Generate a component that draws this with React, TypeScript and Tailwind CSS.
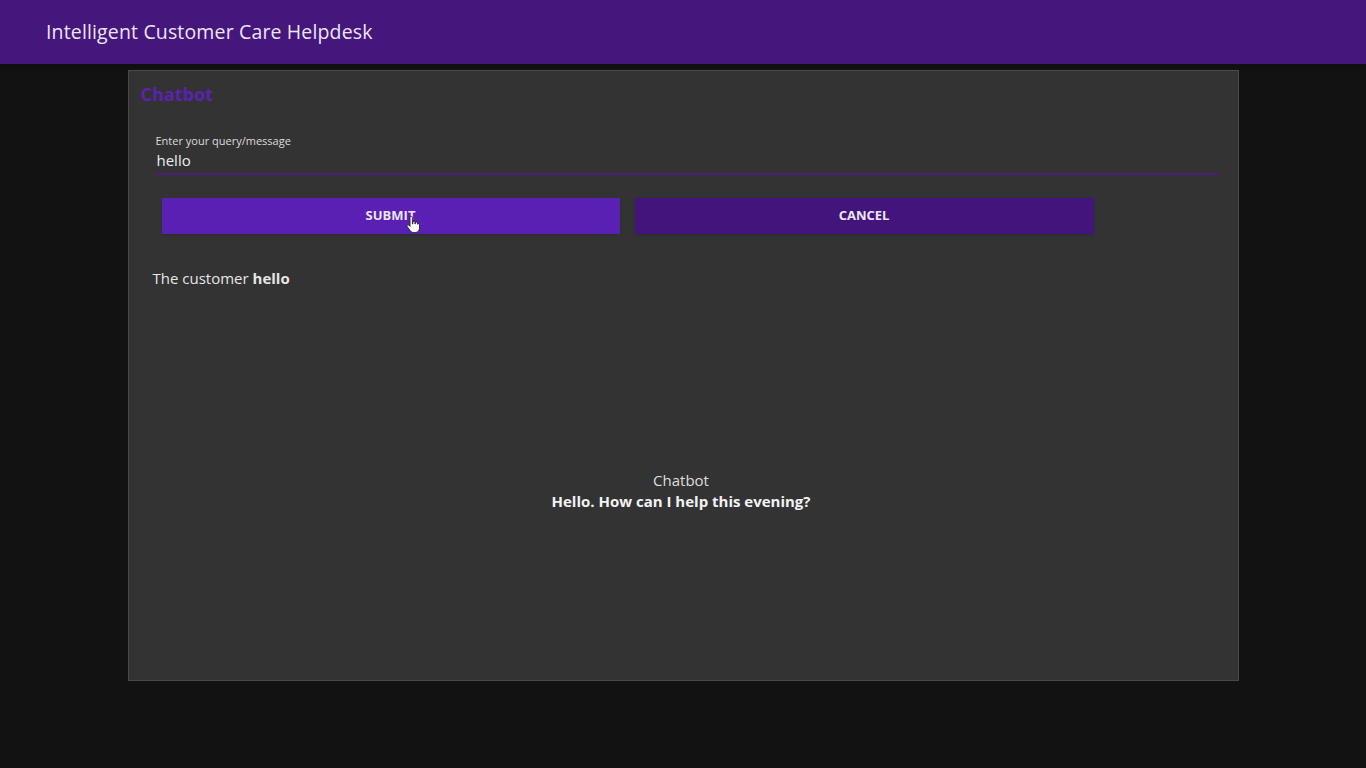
import React, { useState } from 'react';

const font = { fontFamily: '"Open Sans", "Noto Sans", sans-serif' };

const App: React.FC = () => {
  const [query, setQuery] = useState('hello');
  const [sent, setSent] = useState('hello');

  return (
    <div className="min-h-[768px] w-full bg-[#121212] text-white" style={font}>
      <header className="flex h-16 items-center bg-[#45167c] px-[46px] shadow-md">
        <h1 className="text-[19.5px] tracking-[0.15px] text-[#ece6f4]">Intelligent Customer Care Helpdesk</h1>
      </header>

      <main className="flex justify-center pt-[6px]">
        <section className="flex h-[611px] w-[1111px] flex-col border border-[#4a4a4a] bg-[#333333] px-3 pt-[11px]">
          <h2 className="text-[18px] font-bold leading-6 text-[#5b22b3]">Chatbot</h2>

          <div className="mt-[27px] pl-[15px] pr-[7px]">
            <label className="block text-[11px] leading-4 text-[#dcdcdc]">Enter your query/message</label>
            <input
              value={query}
              onChange={(e) => setQuery(e.target.value)}
              className="mt-px block w-full border-b-2 border-[#46207a] bg-transparent pb-[3px] pl-px text-[15px] leading-5 text-[#eeeeee] focus:outline-none"
            />
          </div>

          <div className="mt-[23px] flex gap-[15px] pl-[21px]">
            <div className="relative">
              <button
                type="button"
                onClick={() => setSent(query)}
                className="h-9 w-[458px] bg-[#5a1fb3] text-[13px] font-bold text-[#ece6f4] shadow"
              >
                SUBMIT
              </button>
              <svg
                className="pointer-events-none absolute left-[244px] top-[18px]"
                width="14"
                height="18"
                viewBox="0 0 14 18"
              >
                <path
                  d="M4 1.5a1.2 1.2 0 0 1 2.4 0V8h.4V6.5a1.1 1.1 0 0 1 2.2 0V8h.3V7.2a1.1 1.1 0 0 1 2.2 0V8.2a1.1 1.1 0 0 1 2 .6V12c0 2.6-1.6 4.5-4.2 4.5H7.6c-1.6 0-2.6-.8-3.5-2L1.2 10.6a1.1 1.1 0 0 1 1.7-1.4L4 10.4z"
                  fill="#fff"
                  stroke="#222"
                  strokeWidth="0.9"
                />
              </svg>
            </div>
            <button
              type="button"
              onClick={() => setQuery('')}
              className="h-9 w-[459px] bg-[#43157c] text-[13px] font-bold text-[#ece6f4] shadow"
            >
              CANCEL
            </button>
          </div>

          <p className="mt-[33px] pl-[12px] text-[15px] text-[#e6e6e6]">
            The customer <span className="font-bold">{sent}</span>
          </p>

          <div className="mt-[180px] flex flex-col items-center pr-[4px] text-[15px] leading-[21px]">
            <span className="text-[#dedede]">Chatbot</span>
            <span className="font-bold text-[#f2f2f2]">Hello. How can I help this evening?</span>
          </div>
        </section>
      </main>
    </div>
  );
};

export default App;
